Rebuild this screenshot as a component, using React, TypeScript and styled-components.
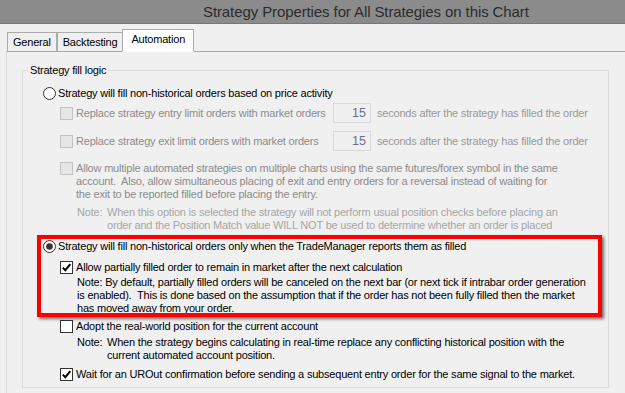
import React from 'react'
import styled, {createGlobalStyle} from 'styled-components'

const GlobalStyle = createGlobalStyle`
  html, body {
    margin: 0;
    padding: 0;
  }
  body {
    width: 625px;
    height: 393px;
    overflow: hidden;
    background: #f0f0f0;
    color: #000;
    font-family: 'Liberation Sans', Arial, sans-serif;
    font-size: 11px;
    letter-spacing: -0.2px;
  }
`

export default function App() {
  return (
    <>
      <GlobalStyle />
      <TitleBar>Strategy Properties for All Strategies on this Chart</TitleBar>
      <TabStrip>
        <Tab>General</Tab>
        <Tab>Backtesting</Tab>
        <Tab $active>Automation</Tab>
      </TabStrip>
      <Panel>
        <Group>
          <Legend>Strategy fill logic</Legend>
          <Content>
            <Option>
              <Radio />
              <Text>Strategy will fill non-historical orders based on price activity</Text>
            </Option>

            <CheckRow $mt={3} $center>
              <Check disabled />
              <InputLabel $disabled>Replace strategy entry limit orders with market orders</InputLabel>
              <Seconds readOnly value="15" />
              <Suffix>seconds after the strategy has filled the order</Suffix>
            </CheckRow>

            <CheckRow $mt={8} $center>
              <Check disabled />
              <InputLabel $disabled>Replace strategy exit limit orders with market orders</InputLabel>
              <Seconds readOnly value="15" />
              <Suffix>seconds after the strategy has filled the order</Suffix>
            </CheckRow>

            <CheckRow $mt={11}>
              <Check disabled />
              <Text $disabled>
                {'Allow multiple automated strategies on multiple charts using the same futures/forex symbol in the same\n' +
                  'account.  Also, allow simultaneous placing of exit and entry orders for a reversal instead of waiting for\n' +
                  'the exit to be reported filled before placing the entry.'}
              </Text>
            </CheckRow>

            <Note $mt={5} $disabled>
              <NoteLabel>Note:</NoteLabel>
              <Text>
                {'When this option is selected the strategy will not perform usual position checks before placing an\n' +
                  'order and the Position Match value WILL NOT be used to determine whether an order is placed'}
              </Text>
            </Note>

            <Highlight>
              <Option>
                <Radio checked />
                <Text>Strategy will fill non-historical orders only when the TradeManager reports them as filled</Text>
              </Option>
              <CheckRow $mt={8}>
                <Check checked />
                <Text>Allow partially filled order to remain in market after the next calculation</Text>
              </CheckRow>
              <Note $mt={2}>
                <Text>
                  {'Note: By default, partially filled orders will be canceled on the next bar (or next tick if intrabar order generation\n' +
                    'is enabled).  This is done based on the assumption that if the order has not been fully filled then the market\n' +
                    'has moved away from your order.'}
                </Text>
              </Note>
            </Highlight>

            <CheckRow $mt={5}>
              <Check />
              <Text>Adopt the real-world position for the current account</Text>
            </CheckRow>
            <Note $mt={3}>
              <NoteLabel>Note:</NoteLabel>
              <Text>
                {'When the strategy begins calculating in real-time replace any conflicting historical position with the\n' +
                  'current automated account position.'}
              </Text>
            </Note>

            <CheckRow $mt={6}>
              <Check checked />
              <Text>Wait for an UROut confirmation before sending a subsequent entry order for the same signal to the market.</Text>
            </CheckRow>
          </Content>
        </Group>
      </Panel>
    </>
  )
}

function Radio({checked}: {checked?: boolean}) {
  return (
    <RadioIcon width={13} height={13} viewBox="0 0 13 13">
      <circle cx={6.5} cy={6.5} r={6} fill="#fff" stroke="#333" />
      {checked && <circle cx={6.5} cy={6.5} r={3.3} fill="#333" />}
    </RadioIcon>
  )
}

function Check({checked, disabled}: {checked?: boolean; disabled?: boolean}) {
  return (
    <CheckBox $disabled={disabled}>
      {checked && (
        <svg width={11} height={11} viewBox="0 0 11 11">
          <path d="M1.8 5.6 L4.3 8.2 L9.3 2.2" fill="none" stroke="#000" strokeWidth={2} />
        </svg>
      )}
    </CheckBox>
  )
}

const TitleBar = styled.div`
  height: 23px;
  line-height: 23px;
  padding-left: 203px;
  background: #8b8b8b;
  border-bottom: 1px solid #777;
  color: #2b2b2b;
  font-size: 15px;
  letter-spacing: -0.1px;
  white-space: nowrap;
`

const TabStrip = styled.div`
  display: flex;
  align-items: flex-end;
  height: 28px;
  padding-left: 7px;
  position: relative;
  z-index: 1;
  margin-bottom: -1px;
`

const Tab = styled.div<{$active?: boolean}>`
  height: ${p => (p.$active ? '21px' : '18px')};
  line-height: 19px;
  padding: 0 ${p => (p.$active ? '8px' : '5px')};
  margin-left: ${p => (p.$active ? '-1px' : '0')};
  background: ${p => (p.$active ? '#fff' : '#f0f0f0')};
  border: 1px solid #acacac;
  border-bottom: ${p => (p.$active ? '1px solid #fff' : '1px solid #acacac')};
  white-space: nowrap;
`

const Panel = styled.div`
  margin-left: 6px;
  height: 340px;
  border-top: 1px solid #acacac;
  border-left: 1px solid #d9d9d9;
  padding-left: 15px;
  padding-top: 12px;
`

const Group = styled.fieldset`
  box-sizing: border-box;
  width: 587px;
  margin: 0;
  padding: 0 0 6px 0;
  border: 1px solid #dcdcdc;
`

const Legend = styled.legend`
  margin-left: 5px;
  padding: 0 2px;
  line-height: 13px;
`

const Content = styled.div`
  display: flex;
  flex-direction: column;
  padding-left: 20px;
  padding-top: 10px;
`

const Text = styled.div<{$disabled?: boolean}>`
  line-height: 13px;
  white-space: pre;
  color: ${p => (p.$disabled ? '#8c8c8c' : 'inherit')};
`

const Option = styled.div`
  display: flex;
  align-items: center;
  gap: 2px;
`

const RadioIcon = styled.svg`
  flex: none;
`

const CheckRow = styled.div<{$mt?: number; $center?: boolean}>`
  display: flex;
  align-items: ${p => (p.$center ? 'center' : 'flex-start')};
  gap: 3px;
  margin-left: 17px;
  margin-top: ${p => p.$mt ?? 0}px;
`

const CheckBox = styled.span<{$disabled?: boolean}>`
  flex: none;
  box-sizing: border-box;
  width: 13px;
  height: 13px;
  display: flex;
  align-items: center;
  justify-content: center;
  border: 1px solid ${p => (p.$disabled ? '#c2c2c2' : '#333')};
  background: ${p => (p.$disabled ? '#e6e6e6' : '#fff')};
`

const InputLabel = styled(Text)`
  width: 254px;
`

const Seconds = styled.input`
  box-sizing: border-box;
  width: 38px;
  height: 20px;
  margin: 0;
  padding: 0 4px 0 0;
  border: 1px solid #d9d9d9;
  background: #f0f0f0;
  color: #6e6e8c;
  font-family: inherit;
  font-size: 12.5px;
  text-align: right;
  outline: none;
`

const Suffix = styled(Text)`
  margin-left: 3px;
  color: #999;
`

const Note = styled.div<{$mt?: number; $disabled?: boolean}>`
  display: flex;
  margin-left: 34px;
  margin-top: ${p => p.$mt ?? 0}px;
  color: ${p => (p.$disabled ? '#a6a6a6' : 'inherit')};
`

const NoteLabel = styled.div`
  width: 30px;
  flex: none;
  line-height: 13px;
`

const Highlight = styled.div`
  position: relative;
  margin-top: 8px;

  &::after {
    content: '';
    position: absolute;
    top: -5px;
    left: -6px;
    right: 6px;
    bottom: -2px;
    border: 4px solid #f00;
    box-shadow: 2px 2px 3px rgba(0, 0, 0, 0.55);
    pointer-events: none;
  }
`
